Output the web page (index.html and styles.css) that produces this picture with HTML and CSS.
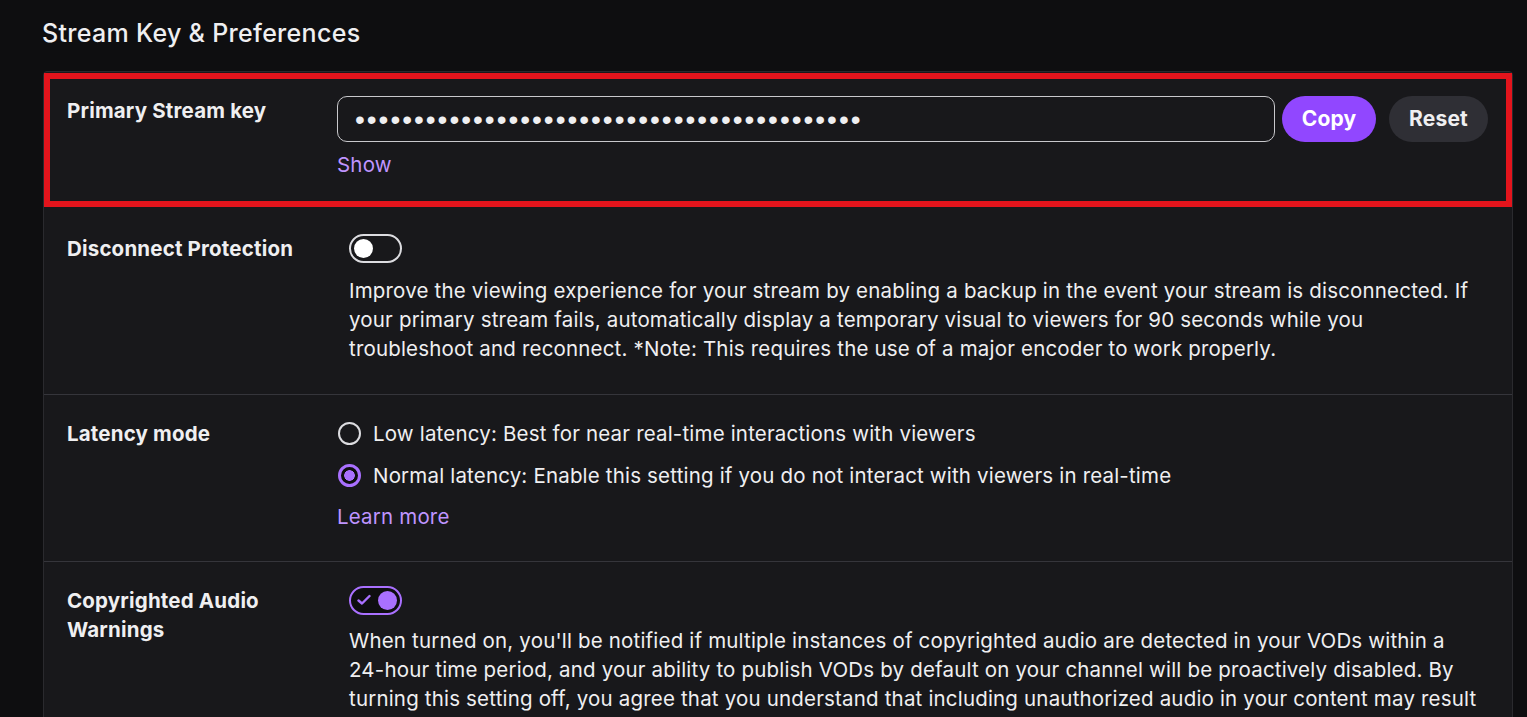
FILE: index.html
```html
<!DOCTYPE html>
<html lang="en">
<head>
    <meta charset="UTF-8">
    <meta name="viewport" content="width=device-width, initial-scale=1.0">
    <title>Stream Key &amp; Preferences</title>
    <link rel="stylesheet" href="styles.css">
</head>
<body>
    <div class="page">
        <h1 class="title">Stream Key &amp; Preferences</h1>
        <div class="card">
            <div class="row row-key">
                <div class="label">Primary Stream key</div>
                <div class="content">
                    <div class="key-line">
                        <div class="key-input">•••••••••••••••••••••••••••••••••••••••••••</div>
                        <div class="btn btn-copy">Copy</div>
                        <div class="btn btn-reset">Reset</div>
                    </div>
                    <div class="link">Show</div>
                </div>
            </div>
            <div class="row row-disconnect">
                <div class="label">Disconnect Protection</div>
                <div class="content indent">
                    <div class="toggle"><span class="knob"></span></div>
                    <p class="desc">Improve the viewing experience for your stream by enabling a backup in the event your stream is disconnected. If your primary stream fails, automatically display a temporary visual to viewers for 90 seconds while you troubleshoot and reconnect. *Note: This requires the use of a major encoder to work properly.</p>
                </div>
            </div>
            <div class="row row-latency">
                <div class="label">Latency mode</div>
                <div class="content">
                    <div class="radio-line">
                        <span class="radio"></span>
                        <span>Low latency: Best for near real-time interactions with viewers</span>
                    </div>
                    <div class="radio-line">
                        <span class="radio checked"></span>
                        <span>Normal latency: Enable this setting if you do not interact with viewers in real-time</span>
                    </div>
                    <div class="link">Learn more</div>
                </div>
            </div>
            <div class="row row-audio">
                <div class="label">Copyrighted Audio Warnings</div>
                <div class="content indent">
                    <div class="toggle on">
                        <svg class="check" width="14" height="12" viewBox="0 0 14 12"><path d="M1.5 6.5 L5 9.5 L12.5 2" fill="none" stroke="#a970ff" stroke-width="2.4" stroke-linecap="round" stroke-linejoin="round"/></svg>
                        <span class="knob"></span>
                    </div>
                    <p class="desc">When turned on, you'll be notified if multiple instances of copyrighted audio are detected in your VODs within a <span class="nowrap">24-hour</span> time period, and your ability to publish VODs by default on your channel will be proactively disabled. By turning this setting off, you agree that you understand that including unauthorized audio in your content may result in a DMCA takedown and strikes against your account.</p>
                </div>
            </div>
        </div>
    </div>
</body>
</html>
```

FILE: styles.css
```css
body {
    margin: 0;
    background-color: #0e0e10;
    color: #efeff1;
    font-family: Inter, "Noto Sans", sans-serif;
    overflow: hidden;
}
.page {
    padding: 15px 14px 0 43px;
}
.title {
    margin: 0 0 20px -1px;
    font-size: 25px;
    line-height: 36px;
    font-weight: 500;
    letter-spacing: 0.3px;
}
.card {
    background-color: #18181b;
    border: 1px solid #2a2a2e;
    border-radius: 4px;
}
.row {
    display: grid;
    grid-template-columns: 270px 1fr;
    padding: 24px 24px 30px 23px;
    border-top: 1px solid #35353b;
    font-size: 20.5px;
    letter-spacing: 0.18px;
    line-height: 29px;
}
.row:first-child {
    border-top: none;
}
.label {
    font-weight: 700;
}
.nowrap {
    white-space: nowrap;
}
.row-key {
    position: relative;
    padding-bottom: 26px;
}
.row-key::after {
    content: "";
    position: absolute;
    top: 1px;
    bottom: -2px;
    left: 0;
    right: 0;
    border: 6px solid #e3141c;
}
.key-line {
    display: flex;
    align-items: center;
}
.key-input {
    flex: 1;
    height: 46px;
    box-sizing: border-box;
    border: 1.5px solid #c8c8cc;
    border-radius: 10px;
    padding: 0 0 0 17px;
    font-family: "Liberation Sans", sans-serif;
    font-size: 28px;
    letter-spacing: 2px;
    line-height: 45px;
}
.btn {
    height: 46px;
    border-radius: 23px;
    font-weight: 700;
    font-size: 21px;
    letter-spacing: 0.2px;
    line-height: 46px;
    text-align: center;
}
.btn-copy {
    width: 94px;
    margin-left: 7px;
    background-color: #9147ff;
    color: #fff;
}
.btn-reset {
    width: 99px;
    margin-left: 13px;
    background-color: #2f2f35;
}
.link {
    color: #bf94ff;
    margin-top: 8px;
}
.row-disconnect {
    padding-top: 28px;
    padding-bottom: 31px;
}
.indent {
    padding-left: 12px;
    margin-right: -3px;
}
.toggle {
    position: relative;
    width: 53px;
    height: 29px;
    box-sizing: border-box;
    border: 2.5px solid #dcdce0;
    border-radius: 15px;
}
.toggle .knob {
    position: absolute;
    left: 3px;
    top: 2.5px;
    width: 19px;
    height: 19px;
    border-radius: 50%;
    background-color: #fff;
}
.toggle.on {
    border-color: #a970ff;
    background-color: #0e0e10;
}
.toggle.on .knob {
    left: auto;
    right: 3px;
    background-color: #a970ff;
}
.check {
    position: absolute;
    left: 6px;
    top: 6px;
}
.desc {
    margin: 13px 0 0;
}
.row-latency {
    padding-top: 24px;
}
.radio-line {
    display: flex;
    align-items: center;
    margin-bottom: 13px;
}
.radio {
    width: 23px;
    height: 23px;
    box-sizing: border-box;
    border: 2.5px solid #dcdce0;
    border-radius: 50%;
    margin: 0 12px 0 1px;
}
.radio.checked {
    border: 3px solid #a970ff;
    background: radial-gradient(circle, #a970ff 0 5px, #0e0e10 5.6px);
}
.row-latency .link {
    margin-top: -1px;
}
.row-audio .desc {
    margin-top: 11px;
}
```
